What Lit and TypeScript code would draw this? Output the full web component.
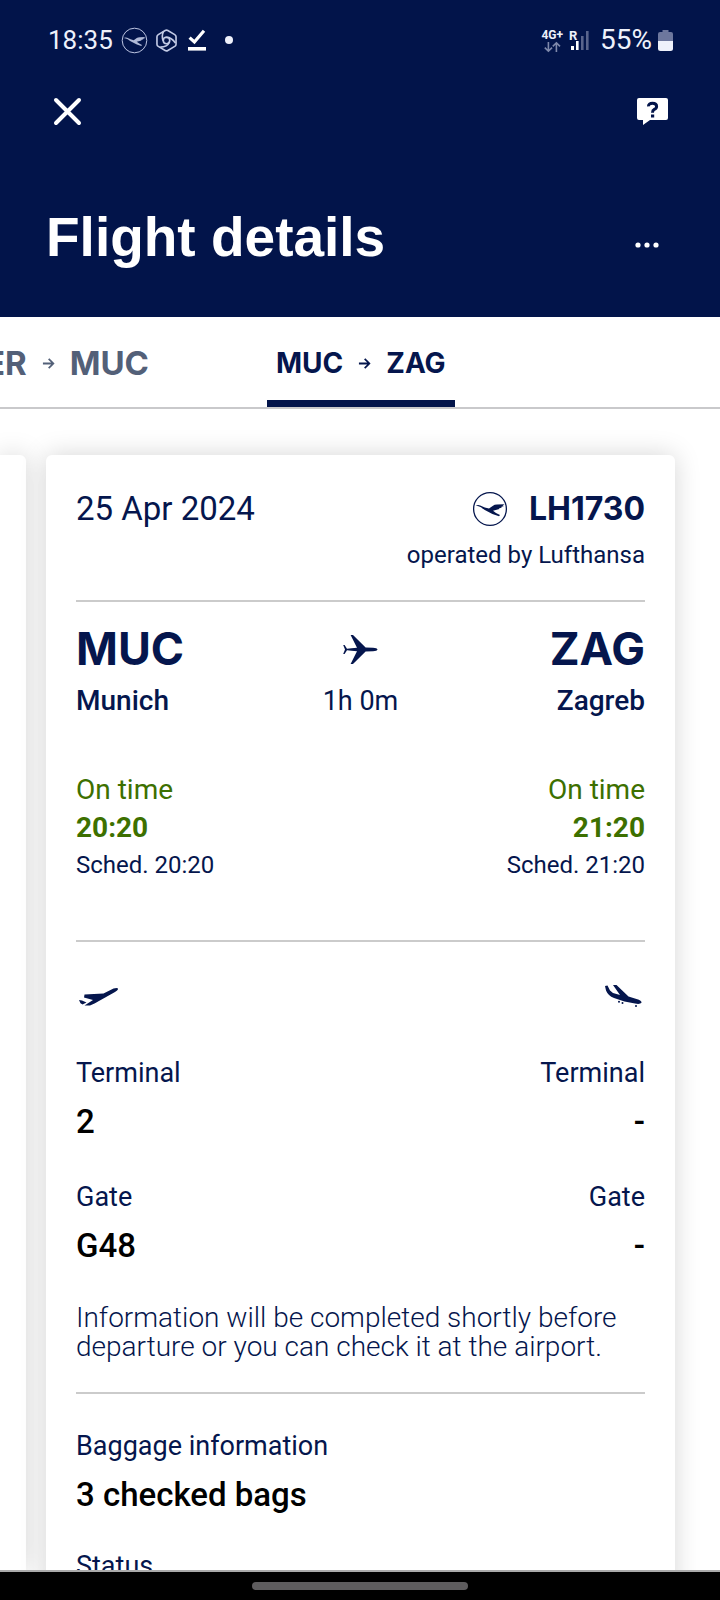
import { LitElement, html, css, svg, nothing } from "lit";
import { customElement, property } from "lit/decorators.js";

const crane = (filled: boolean) => svg`
  <circle cx="18" cy="18" r="16.4" fill="none" stroke="currentColor" stroke-width="1.3" />
  <path fill="currentColor" opacity=${filled ? "1" : "0.9"}
    d="M3.600 14.600 Q6 13.600 8.200 14.400 Q13 16.600 17 17.600 L21 14.700 Q22.400 13.600 25 13.500 L32.600 13.300 L30.600 14.600 L32 14.900 L29 16 L30 16.400 L26.800 17.400 L27.400 17.900 L21 19.800 Q24 22.600 28 24 L27 25.200 Q20.600 23.800 16.600 21 Q12.400 19.200 9 16.200 Q6.600 15.200 3.600 14.600 Z" />`;

const arrow = html`<svg class="arrow" viewBox="0 0 14 14" aria-hidden="true">
  <path d="M1 7 H12 M7.2 2 L12.2 7 L7.2 12" fill="none" stroke="currentColor" stroke-width="1.9" />
</svg>`;

@customElement("status-bar")
export class StatusBar extends LitElement {
  static styles = css`
    :host {
      display: flex;
      justify-content: space-between;
      align-items: center;
      height: 80px;
      padding: 0 47px 0 48px;
      font: 400 26px/32px Roboto, sans-serif;
      color: #eef1fb;
    }
    .group { display: flex; align-items: center; }
    .left { gap: 8px; }
    .right { gap: 6px; }
    svg { display: block; overflow: visible; }
    .crane { width: 27px; height: 27px; color: #c3cbe6; }
    .hex { width: 21px; height: 23px; }
    .check { width: 20px; height: 22px; margin-left: 2px; }
    .dot { width: 8px; height: 8px; border-radius: 50%; background: #eef1fb; margin-left: 10px; }
    .net { display: grid; justify-items: center; font: 700 12px/12px Roboto, sans-serif; gap: 1px; }
    .updown { width: 17px; height: 10px; }
    .signal { width: 21px; height: 22px; }
    .battery { width: 15px; height: 21px; }
    .percent { margin-left: 4px; font-size: 28px; }
  `;
  render() {
    return html`
      <div class="group left">
        <span>18:35</span>
        <svg class="crane" viewBox="0 0 36 36">${crane(false)}</svg>
        <svg class="hex" viewBox="0 0 22 24" fill="none" stroke="#c3cbe6" stroke-width="1.7" stroke-linejoin="round">
          <path d="M9.6 1.6 Q11 .8 12.4 1.6 L19.6 5.8 Q21 6.6 21 8.2 V15.8 Q21 17.4 19.6 18.2 L12.4 22.4 Q11 23.2 9.6 22.4 L2.4 18.2 Q1 17.4 1 15.8 V8.2 Q1 6.6 2.4 5.8 Z" />
          <circle cx="11" cy="12" r="3.4" />
          <path d="M7.6 12.600 Q5.400 7 8 2.400 M9.800 8.800 Q15.600 8 20.400 14.600 M14 13.600 Q12 19 4.400 19" stroke-width="1.7" />
        </svg>
        <svg class="check" viewBox="0 0 20 22">
          <path d="M2.6 8.6 L7.4 13 L17 1.8" fill="none" stroke="#fff" stroke-width="3.2" />
          <rect x="1" y="18" width="18" height="3.6" fill="#fff" />
        </svg>
        <span class="dot"></span>
      </div>
      <div class="group right">
        <span class="net">
          4G+
          <svg class="updown" viewBox="0 0 17 10" fill="none" stroke="#7f89ab" stroke-width="1.6">
            <path d="M4.4 0 V9 M.8 5.6 L4.4 9.2 L8 5.6" /><path d="M12.4 10 V1 M8.8 4.4 L12.4 .8 L16 4.4" />
          </svg>
        </span>
        <svg class="signal" viewBox="0 0 21 22">
          <text x="0" y="11" font-family="Roboto, sans-serif" font-weight="700" font-size="13" fill="#eef1fb">R</text>
          <rect x="2" y="17" width="3" height="4" fill="#fff" /><rect x="7" y="12" width="2.6" height="9" fill="#fff" />
          <rect x="12" y="7" width="2.6" height="14" fill="#59648c" /><rect x="17" y="2" width="2.6" height="19" fill="#59648c" />
        </svg>
        <span class="percent">55%</span>
        <svg class="battery" viewBox="0 0 15 21">
          <path d="M4.5 0 H10.500 V2 H13 Q15 2 15 4 V11 H0 V4 Q0 2 2 2 H4.500 Z" fill="#6d779d" />
          <path d="M0 11 H15 V18.500 Q15 21 12.500 21 H2.500 Q0 21 0 18.500 Z" fill="#eef1fb" />
        </svg>
      </div>
    `;
  }
}

@customElement("detail-pair")
export class DetailPair extends LitElement {
  @property() label = "";
  @property() from = "";
  @property() to = "";
  static styles = css`
    :host { display: flex; justify-content: space-between; }
    .item { display: grid; gap: 11px; margin: 0; }
    .item.end { text-align: right; }
    dt { font: 400 27px/36px Roboto, sans-serif; }
    dd { margin: 0; font: 500 33px/40px Roboto, sans-serif; color: #000; }
  `;
  render() {
    return html`
      <dl class="item"><dt>${this.label}</dt><dd>${this.from}</dd></dl>
      ${this.to ? html`<dl class="item end"><dt>${this.label}</dt><dd>${this.to}</dd></dl>` : nothing}
    `;
  }
}

@customElement("app-root")
export class AppRoot extends LitElement {
  static styles = css`
    :host {
      display: flex;
      flex-direction: column;
      height: 100vh;
      overflow: hidden;
      background: #fff;
      color: #05164d;
      font-family: Roboto, sans-serif;
    }
    * { box-sizing: border-box; }
    svg { display: block; }
    button { border: 0; padding: 0; background: none; color: inherit; font: inherit; cursor: pointer; }
    h1, h2, p { margin: 0; }

    .top { flex: none; background: #02144a; color: #fff; padding-bottom: 47px; }
    .toolbar { display: flex; justify-content: space-between; align-items: center; height: 62px; padding: 0 50px; }
    .close { width: 34px; height: 34px; }
    .help { width: 34px; height: 34px; }
    .title { display: flex; justify-content: space-between; align-items: center; padding: 62px 58px 0 46px; }
    .title h1 { font: 700 55px/66px "Liberation Sans", sans-serif; }
    .more { width: 30px; height: 30px; margin-top: 16px; }

    .tabs { flex: none; display: flex; height: 92px; border-bottom: 2px solid #c9c9cb; }
    .tab { display: flex; align-items: center; gap: 15px; font: 700 28px/36px Inter, sans-serif; white-space: nowrap; }
    .tab.prev { flex: none; width: 149px; justify-content: flex-end; overflow: hidden; color: #536078; font-size: 33px; padding-top: 2px; margin-right: 118px; }
    .tab.active { padding: 9px 9px 0 9px; border-bottom: 7px solid #02144a; }
    .arrow { flex: none; width: 13px; height: 13px; }

    .carousel { flex: 1; min-height: 0; display: flex; gap: 20px; padding: 46px 45px 0 0; overflow: hidden; }
    .card { background: #fff; border-radius: 6px; box-shadow: 0 0 26px rgba(0, 0, 0, 0.17); }
    .peek { flex: none; width: 26px; border-radius: 0 6px 0 0; }
    .main { flex: 1; min-width: 0; height: max-content; padding: 34px 30px; }

    .row { display: flex; justify-content: space-between; }
    .head { padding-bottom: 29px; }
    .date { font-size: 33px; line-height: 40px; }
    .flight { display: grid; justify-items: end; gap: 10px; }
    .number { display: flex; align-items: center; gap: 21px; font: 700 32px/40px Inter, sans-serif; }
    .logo { width: 36px; height: 36px; }
    .small { font-size: 24px; line-height: 32px; }

    .section { border-top: 2px solid #cbcbcb; }
    .route { padding: 21px 0 57px; }
    .route .row { display: grid; grid-template-columns: 1fr auto 1fr; }
    .stack { display: grid; gap: 8px; }
    .end { text-align: right; justify-items: end; }
    .mid { justify-items: center; }
    .code { font: 700 45px/52px Inter, sans-serif; }
    .city { font-size: 28px; line-height: 36px; font-weight: 500; }
    .duration { font-size: 27px; line-height: 36px; font-weight: 400; }
    .jet { width: 36px; height: 52px; }
    .times { padding-top: 52px; }
    .green { color: #3d7000; font-size: 28px; line-height: 38px; }
    .green.strong { font-weight: 700; }
    .sched { font-size: 24px; line-height: 36px; }

    .gates { display: grid; gap: 37px; padding: 36px 0 31px; }
    .icon { width: 42px; height: 40px; }
    .note { font-size: 28px; line-height: 29px; font-weight: 300; }
    .bags { display: grid; gap: 33px; padding-top: 34px; }

    .system { flex: none; display: flex; justify-content: center; align-items: center; height: 30px; background: #000; border-top: 2px solid #aaa; }
    .pill { width: 30%; height: 8px; border-radius: 4px; background: #5e5c5e; }
  `;

  render() {
    return html`
      <header class="top">
        <status-bar></status-bar>
        <div class="toolbar">
          <button class="close" aria-label="Close">
            <svg viewBox="0 0 34 34"><path d="M6 6 L29 29 M29 6 L6 29" stroke="#fff" stroke-width="4" stroke-linecap="round" /></svg>
          </button>
          <button class="help" aria-label="Help">
            <svg viewBox="0 0 34 34">
              <path d="M3 4 H30 Q32 4 32 6 V24 Q32 26 30 26 H14 L7 31 V26 H3 Q1 26 1 24 V6 Q1 4 3 4 Z" fill="#fff" />
              <path d="M12.500 12.400 Q12.300 9.300 16.500 9.300 Q20.600 9.300 20.600 12.400 Q20.600 14.300 18.300 15.400 Q16.500 16.300 16.500 18.800" fill="none" stroke="#02144a" stroke-width="3" />
              <rect x="15" y="20.500" width="3.200" height="3" fill="#02144a" />
            </svg>
          </button>
        </div>
        <div class="title">
          <h1>Flight details</h1>
          <button class="more" aria-label="More options">
            <svg viewBox="0 0 30 30" fill="#fff"><circle cx="6" cy="15" r="2.600" /><circle cx="15" cy="15" r="2.600" /><circle cx="24" cy="15" r="2.600" /></svg>
          </button>
        </div>
      </header>

      <nav class="tabs" role="tablist" aria-label="Flights">
        <button class="tab prev" role="tab" aria-selected="false"><span>BER</span>${arrow}<span>MUC</span></button>
        <button class="tab active" role="tab" aria-selected="true"><span>MUC</span>${arrow}<span>ZAG</span></button>
      </nav>

      <main class="carousel">
        <div class="card peek" aria-hidden="true"></div>
        <article class="card main">
          <div class="row head">
            <span class="date">25 Apr 2024</span>
            <div class="flight">
              <span class="number"><svg class="logo" viewBox="0 0 36 36">${crane(true)}</svg>LH1730</span>
              <span class="small">operated by Lufthansa</span>
            </div>
          </div>

          <section class="section route">
            <div class="row">
              <div class="stack"><span class="code">MUC</span><span class="city">Munich</span></div>
              <div class="stack mid">
                <svg class="jet" viewBox="0 0 36 52" fill="currentColor">
                  <path d="M35.500 26.500 Q35 28 31 28.200 L23.600 28.500 L11 41 H8.600 L15 28.300 Q9 28 5 27.300 L2.600 31 L1.200 31 L3 26.500 L1.200 22 L2.600 22 L5 25.700 Q9 25 15 24.700 L8.600 12 H11 L23.600 24.500 L31 24.800 Q35 25 35.500 26.500 Z" />
                </svg>
                <span class="duration">1h 0m</span>
              </div>
              <div class="stack end"><span class="code">ZAG</span><span class="city">Zagreb</span></div>
            </div>
            <div class="row times">
              <div>
                <p class="green">On time</p>
                <p class="green strong">20:20</p>
                <p class="sched">Sched. 20:20</p>
              </div>
              <div></div>
              <div class="end">
                <p class="green">On time</p>
                <p class="green strong">21:20</p>
                <p class="sched">Sched. 21:20</p>
              </div>
            </div>
          </section>

          <section class="section gates">
            <div class="row">
              <svg class="icon" viewBox="0 0 42 40" fill="currentColor" role="img" aria-label="Departure">
                <path d="M8.500 27.600 L17 22 L8 19.400 L8.500 16.600 L27.500 15.600 L37.500 10.600 Q41 9.400 42 10.600 Q42.400 12.200 39 14 L18.500 25.500 L14 27.600 Z M3 22 L6 22.600 L10.500 24.400 L6.500 26.400 L4.500 25.200 Z" />
              </svg>
              <svg class="icon" viewBox="0 0 42 40" fill="currentColor" role="img" aria-label="Arrival">
                <path d="M2 8 L4.500 7.500 L7 12.500 L10 15 L17 17 L10 7 L13.500 7 L25.500 18.500 L33.500 21 Q39 22.600 38.500 24.800 Q37 26.600 32 25.600 L21.500 23.400 L11 20 Q5 17.600 3 12.500 Z" />
                <circle cx="16" cy="23.800" r="1" /><circle cx="19.500" cy="24.900" r="1" /><circle cx="33" cy="28" r="1" />
              </svg>
            </div>
            <detail-pair label="Terminal" from="2" to="-"></detail-pair>
            <detail-pair label="Gate" from="G48" to="-"></detail-pair>
            <p class="note">Information will be completed shortly before departure or you can check it at the airport.</p>
          </section>

          <section class="section bags">
            <detail-pair label="Baggage information" from="3 checked bags"></detail-pair>
            <detail-pair label="Status" from="Checked in"></detail-pair>
          </section>
        </article>
      </main>

      <footer class="system"><div class="pill"></div></footer>
    `;
  }
}
